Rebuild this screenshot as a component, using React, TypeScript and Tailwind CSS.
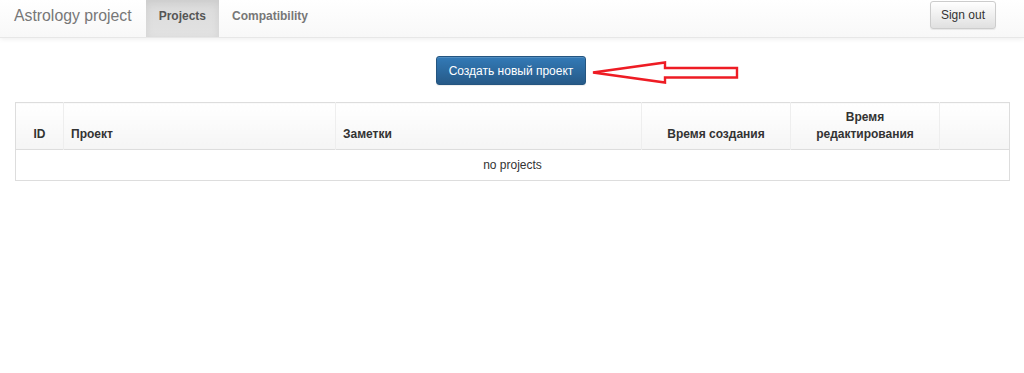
import React from 'react';

const columns = [
  { label: 'ID', width: 'w-[48px]', align: 'text-center' },
  { label: 'Проект', width: 'w-[272px]', align: 'text-left' },
  { label: 'Заметки', width: 'w-[306px]', align: 'text-left' },
  { label: 'Время создания', width: 'w-[149px]', align: 'text-center' },
  { label: 'Время редактирования', width: 'w-[149px]', align: 'text-center' },
  { label: '', width: 'w-[70px]', align: 'text-center' },
];

// red hand-drawn arrow pointing at the create button
const Arrow: React.FC = () => (
  <svg width="152" height="28" viewBox="0 0 152 28" className="absolute left-[calc(100%+4px)] top-[3px]">
    <polygon
      points="3,13.5 75,3.5 75,9 147,9 147,18.5 75,18.5 75,23.5"
      fill="none"
      stroke="#ee1c24"
      strokeWidth="2.4"
      strokeLinejoin="miter"
    />
  </svg>
);

const App: React.FC = () => {
  const projects: string[] = [];

  return (
    <div className="min-h-[373px] bg-white font-['Liberation_Sans',Arial,sans-serif] text-[#333]">
      {/* top navbar */}
      <nav className="flex h-[38px] items-stretch border-b border-[#e7e7e7] bg-linear-to-b from-white to-[#f8f8f8] shadow-[0_1px_5px_rgba(0,0,0,0.075)]">
        <a className="px-[14px] pt-[6px] text-[15.8px] leading-[20px] text-[#777]">Astrology project</a>
        <a className="bg-linear-to-b from-[#dbdbdb] to-[#e2e2e2] px-[13px] pt-[8px] text-[12px] font-bold leading-[17px] text-[#555] shadow-[inset_0_3px_9px_rgba(0,0,0,0.075)]">
          Projects
        </a>
        <a className="px-[13px] pt-[8px] text-[12px] font-bold leading-[17px] text-[#777]">Compatibility</a>
        <div className="ml-auto mr-[28px] pt-[1px]">
          <button className="h-[28px] rounded-[3px] border border-[#ccc] bg-linear-to-b from-white to-[#e0e0e0] px-[10px] text-[12px] text-[#333] shadow-[inset_0_1px_0_rgba(255,255,255,0.15),0_1px_1px_rgba(0,0,0,0.075)]">
            Sign out
          </button>
        </div>
      </nav>

      <div className="px-[15px]">
        <div className="flex justify-center pt-[18px]">
          <div className="relative -translate-x-[1px]">
            <button className="h-[29px] rounded-[3px] border border-[#245580] bg-linear-to-b from-[#337ab7] to-[#265a88] px-[12px] text-[12px] text-white shadow-[inset_0_1px_0_rgba(255,255,255,0.15),0_1px_1px_rgba(0,0,0,0.075)]">
              Создать новый проект
            </button>
            <Arrow />
          </div>
        </div>

        <table className="mt-[17px] w-full table-fixed border-collapse border border-[#ddd] text-[12px]">
          <thead>
            <tr className="border-b border-[#ddd]">
              {columns.map((c, i) => (
                <th
                  key={i}
                  className={`${c.width} ${c.align} ${i > 0 ? 'border-l border-[#eee]' : ''} bg-linear-to-b from-white to-[#f5f5f5] px-[7px] py-[6px] align-bottom font-bold leading-[17px] text-[#333]`}
                >
                  {c.label === 'Время редактирования' ? (
                    <>
                      Время
                      <br />
                      редактирования
                    </>
                  ) : (
                    c.label
                  )}
                </th>
              ))}
            </tr>
          </thead>
          <tbody>
            {projects.length === 0 && (
              <tr>
                <td colSpan={6} className="pt-[7px] pb-[6px] text-center leading-[17px] text-[#333]">
                  no projects
                </td>
              </tr>
            )}
          </tbody>
        </table>
      </div>
    </div>
  );
};

export default App;
